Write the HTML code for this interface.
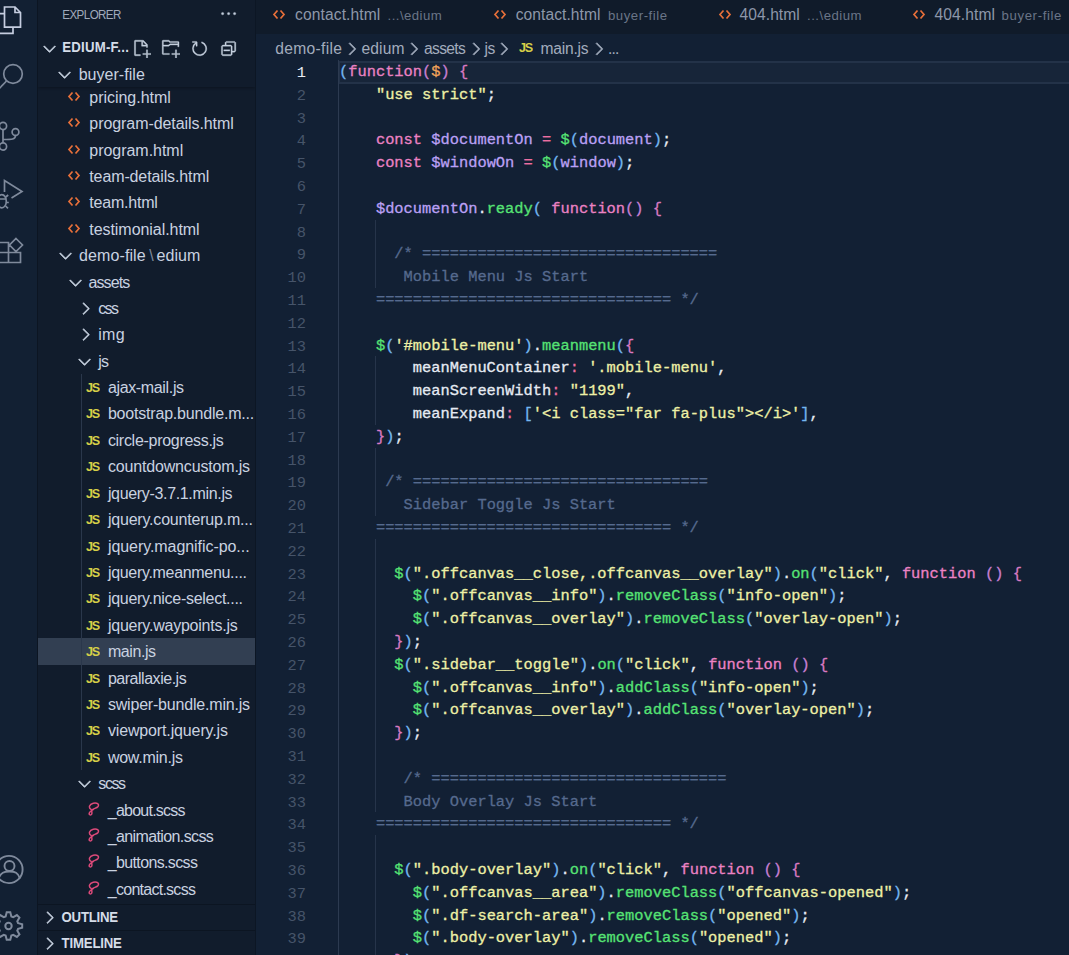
<!DOCTYPE html>
<html lang="en">
<head>
<meta charset="utf-8">
<title>main.js - edium - Visual Studio Code</title>
<style>
*{box-sizing:border-box;margin:0;padding:0}
html,body{width:1069px;height:955px;overflow:hidden;background:#122034}
body{position:relative;font-family:"Liberation Sans",sans-serif;color:#c5cfde;font-size:15.6px}
.ab{position:absolute}
#act{position:absolute;left:0;top:0;width:37px;height:955px;background:#122033;overflow:hidden}
#actb{position:absolute;left:37px;top:0;width:1px;height:955px;background:#0c1522}
#side{position:absolute;left:38px;top:0;width:218px;height:955px;background:#111c2c;overflow:hidden}
#sideb{position:absolute;left:255px;top:0;width:1px;height:955px;background:#0c1624}
#tabs{position:absolute;left:256px;top:0;width:813px;height:34px;background:#101b2a;overflow:hidden}
#crumbs{position:absolute;left:256px;top:34px;width:813px;height:26px;background:#122034}
#editor{position:absolute;left:256px;top:60px;width:813px;height:895px;background:#122034;overflow:hidden}
/* side */
#tree{position:absolute;left:-38px;top:0;width:300px;height:955px}
.lbl{font-size:16px;line-height:20px;color:#c9d2e0;white-space:nowrap}
.lbl.sep{color:#7f8a9c}
.jsic{font-weight:bold;font-size:12.6px;line-height:16px;color:#d6cf48;letter-spacing:-1.3px;transform:scaleY(1.04)}
.selrow{left:38px;width:217px;height:26.4px;background:#323f52}
.hdr{white-space:nowrap;transform:scaleY(1.14);transform-origin:0 50%;font-size:11.6px;color:#a0aabb;letter-spacing:0.1px}
.bold{white-space:nowrap;transform:scaleY(1.12);transform-origin:0 85%;font-weight:bold;font-size:13.2px;color:#d5dce8}
/* tabs */
.tab{position:absolute;top:0;height:34px;white-space:nowrap}
.nm{white-space:nowrap;font-size:15.6px;line-height:20px;color:#8d97a9}
.ds{white-space:nowrap;font-size:13.2px;line-height:18px;color:#6a7587}
/* crumbs */
.cr{font-size:15.6px;line-height:20px;color:#a2acbd;white-space:nowrap}
/* code */
.ln{position:absolute;left:0;width:813px;height:23px;line-height:23px;white-space:pre;font-family:"Liberation Mono",monospace;font-size:15.39px;color:#e6ebf3;-webkit-text-stroke:0.3px currentColor}
.ln .no{position:absolute;left:0;top:1.5px;-webkit-text-stroke:0;width:50px;text-align:right;color:#465469}
.ln .tx{position:absolute;left:83px;top:1px}
.ln.cur .no{color:#e6ebf3}
.k{color:#ec82c4}.s{color:#eef0a6}.f{color:#56e374}.v{color:#bba0f5}.p{color:#e6ebf3}.w{color:#e6ebf3}
.o{color:#ec6fa2}.cm{color:#566a8e}.pa{color:#f0a25a}
.b1{color:#74b6f0}.b2{color:#c67fd2}.b3{color:#da7ac2}
#curline{position:absolute;left:82px;top:1px;width:731px;height:22.5px;background:#172539;border:2px solid #233248;border-right:0}
.guide{position:absolute;width:1px;background:#26344a}
</style>
</head>
<body>
<div id="act">
 <svg class="ab" style="left:-14px;top:0" width="52" height="955" viewBox="-14 0 52 955" fill="none" stroke-width="1.7">
  <!-- files -->
  <g stroke="#c5cde0"><path d="M4.500 7 H15 L20.500 12.500 V27.200 H4.500 Z M15 7 V12.500 H20.500"/><path d="M4.500 13.600 H-6 V33.300 H13 V27.200"/></g>
  <g stroke="#7f8a9c">
  <!-- search -->
  <circle cx="13" cy="74" r="9.3"/><path d="M6.5 81 L-4 92"/>
  <!-- scm -->
  <circle cx="3" cy="126" r="3.6"/><circle cx="15.5" cy="132" r="3.4"/><circle cx="3" cy="146.5" r="3.6"/>
  <path d="M3 129.6 V143 M15.5 135.4 C15.5 139.5 12 139.5 3 139.5"/>
  <!-- run -->
  <path d="M4.5 192 V180.5 L22 191.5 L11.5 198"/><ellipse cx="1.8" cy="201.2" rx="4.5" ry="6.6"/><path d="M-2.700 199 H6.300 M5.800 197 L8.200 195 M6.300 202.500 H8.800 M5.600 206 L8 208.300"/>
  <!-- ext -->
  <path d="M-8 242.5 H8.5 V262.5 H-8 Z M-8 252.5 H20.5 V262.5 H8.5 M16 238.5 L22.5 245 L16 251.5 L9.5 245 Z"/>
  <!-- account -->
  <g stroke-width="1.9"><circle cx="9" cy="869.5" r="13.6"/><circle cx="9.5" cy="866" r="5"/><path d="M-1.500 878.500 C1 872.500 4 871.500 9.500 871.500 C15 871.500 18 872.500 20 878.500"/></g>
  <!-- gear -->
  <g stroke-width="2"><circle cx="8.5" cy="926" r="3.2"/>
  <path d="M18.08 923.14 L22.18 924.21 L22.18 927.79 L18.08 928.86 L17.30 930.75 L19.44 934.41 L16.91 936.94 L13.25 934.80 L11.36 935.58 L10.29 939.68 L6.71 939.68 L5.64 935.58 L3.75 934.80 L0.09 936.94 L-2.44 934.41 L-0.30 930.75 L-1.08 928.86 L-5.18 927.79 L-5.18 924.21 L-1.08 923.14 L-0.30 921.25 L-2.44 917.59 L0.09 915.06 L3.75 917.20 L5.64 916.42 L6.71 912.32 L10.29 912.32 L11.36 916.42 L13.25 917.20 L16.91 915.06 L19.44 917.59 L17.30 921.25 Z"/></g>
  </g>
 </svg>
</div>
<div id="actb"></div>
<div id="side">
 <div id="tree">
<svg class="ab" style="left:67.1px;top:91.2px" width="14" height="11" viewBox="0 0 14 11"><path d="M5.5 1.500 L2 5.500 L5.500 9.500 M8.500 1.500 L12 5.500 L8.500 9.500" fill="none" stroke="#e8703a" stroke-width="1.700"/></svg>
<span id="t0" class="ab lbl" style="left:89.3px;top:87.5px;letter-spacing:-0.028px">pricing.html</span>
<svg class="ab" style="left:67.1px;top:117.2px" width="14" height="11" viewBox="0 0 14 11"><path d="M5.5 1.500 L2 5.500 L5.500 9.500 M8.500 1.500 L12 5.500 L8.500 9.500" fill="none" stroke="#e8703a" stroke-width="1.700"/></svg>
<span id="t1" class="ab lbl" style="left:89.3px;top:113.5px;letter-spacing:-0.070px">program-details.html</span>
<svg class="ab" style="left:67.1px;top:144.2px" width="14" height="11" viewBox="0 0 14 11"><path d="M5.5 1.500 L2 5.500 L5.500 9.500 M8.500 1.500 L12 5.500 L8.500 9.500" fill="none" stroke="#e8703a" stroke-width="1.700"/></svg>
<span id="t2" class="ab lbl" style="left:89.3px;top:140.5px;letter-spacing:-0.032px">program.html</span>
<svg class="ab" style="left:67.1px;top:170.2px" width="14" height="11" viewBox="0 0 14 11"><path d="M5.5 1.500 L2 5.500 L5.500 9.500 M8.500 1.500 L12 5.500 L8.500 9.500" fill="none" stroke="#e8703a" stroke-width="1.700"/></svg>
<span id="t3" class="ab lbl" style="left:89.3px;top:166.5px;letter-spacing:-0.121px">team-details.html</span>
<svg class="ab" style="left:67.1px;top:196.2px" width="14" height="11" viewBox="0 0 14 11"><path d="M5.5 1.500 L2 5.500 L5.500 9.500 M8.500 1.500 L12 5.500 L8.500 9.500" fill="none" stroke="#e8703a" stroke-width="1.700"/></svg>
<span id="t4" class="ab lbl" style="left:89.3px;top:192.5px;letter-spacing:-0.206px">team.html</span>
<svg class="ab" style="left:67.1px;top:223.2px" width="14" height="11" viewBox="0 0 14 11"><path d="M5.5 1.500 L2 5.500 L5.500 9.500 M8.500 1.500 L12 5.500 L8.500 9.500" fill="none" stroke="#e8703a" stroke-width="1.700"/></svg>
<span id="t5" class="ab lbl" style="left:89.3px;top:219.5px;letter-spacing:-0.057px">testimonial.html</span>
<svg class="ab" style="left:56.10px;top:246.30px" width="19.20" height="19.20" viewBox="0 0 16 16"><path fill="#c5cfde" stroke="#c5cfde" stroke-width="0.55" fill-rule="evenodd" clip-rule="evenodd" d="M7.976 10.072l4.357-4.357.62.618L8.284 11h-.618L3 6.333l.619-.618 4.357 4.357z"/></svg>
<span id="t6" class="ab lbl" style="left:79.1px;top:245.5px;letter-spacing:0.086px">demo-file</span>

<span id="t7" class="ab lbl" style="left:156.6px;top:245.5px;letter-spacing:0.055px">edium</span>
<svg class="ab" style="left:65.80px;top:273.30px" width="19.20" height="19.20" viewBox="0 0 16 16"><path fill="#c5cfde" stroke="#c5cfde" stroke-width="0.55" fill-rule="evenodd" clip-rule="evenodd" d="M7.976 10.072l4.357-4.357.62.618L8.284 11h-.618L3 6.333l.619-.618 4.357 4.357z"/></svg>
<span id="t8" class="ab lbl" style="left:88.5px;top:272.5px;letter-spacing:-0.910px">assets</span>
<svg class="ab" style="left:75.90px;top:299.00px" width="19.20" height="19.20" viewBox="0 0 16 16"><path fill="#c5cfde" stroke="#c5cfde" stroke-width="0.55" fill-rule="evenodd" clip-rule="evenodd" d="M10.072 8.024L5.715 3.667l.618-.62L11 7.716v.618L6.333 13l-.618-.619 4.357-4.357z"/></svg>
<span id="t9" class="ab lbl" style="left:98.2px;top:298.5px;letter-spacing:-1.650px">css</span>
<svg class="ab" style="left:75.90px;top:325.00px" width="19.20" height="19.20" viewBox="0 0 16 16"><path fill="#c5cfde" stroke="#c5cfde" stroke-width="0.55" fill-rule="evenodd" clip-rule="evenodd" d="M10.072 8.024L5.715 3.667l.618-.62L11 7.716v.618L6.333 13l-.618-.619 4.357-4.357z"/></svg>
<span id="t10" class="ab lbl" style="left:98.2px;top:324.5px;letter-spacing:0.359px">img</span>
<svg class="ab" style="left:75.40px;top:352.30px" width="19.20" height="19.20" viewBox="0 0 16 16"><path fill="#c5cfde" stroke="#c5cfde" stroke-width="0.55" fill-rule="evenodd" clip-rule="evenodd" d="M7.976 10.072l4.357-4.357.62.618L8.284 11h-.618L3 6.333l.619-.618 4.357 4.357z"/></svg>
<span id="t11" class="ab lbl" style="left:98.2px;top:351.5px;letter-spacing:-0.762px">js</span>
<span class="ab jsic" style="left:86.0px;top:379.6px">JS</span>
<span id="t12" class="ab lbl" style="left:107.9px;top:377.5px;letter-spacing:-0.347px">ajax-mail.js</span>
<span class="ab jsic" style="left:86.0px;top:405.6px">JS</span>
<span id="t13" class="ab lbl" style="left:107.9px;top:403.5px;letter-spacing:-0.196px">bootstrap.bundle.m...</span>
<span class="ab jsic" style="left:86.0px;top:432.6px">JS</span>
<span id="t14" class="ab lbl" style="left:107.9px;top:430.5px;letter-spacing:-0.290px">circle-progress.js</span>
<span class="ab jsic" style="left:86.0px;top:458.6px">JS</span>
<span id="t15" class="ab lbl" style="left:107.9px;top:456.5px;letter-spacing:-0.163px">countdowncustom.js</span>
<span class="ab jsic" style="left:86.0px;top:485.6px">JS</span>
<span id="t16" class="ab lbl" style="left:107.9px;top:483.5px;letter-spacing:-0.334px">jquery-3.7.1.min.js</span>
<span class="ab jsic" style="left:86.0px;top:511.6px">JS</span>
<span id="t17" class="ab lbl" style="left:107.9px;top:509.5px;letter-spacing:-0.200px">jquery.counterup.m...</span>
<span class="ab jsic" style="left:86.0px;top:538.6px">JS</span>
<span id="t18" class="ab lbl" style="left:107.9px;top:536.5px;letter-spacing:-0.059px">jquery.magnific-po...</span>
<span class="ab jsic" style="left:86.0px;top:564.6px">JS</span>
<span id="t19" class="ab lbl" style="left:107.9px;top:562.5px;letter-spacing:-0.310px">jquery.meanmenu....</span>
<span class="ab jsic" style="left:86.0px;top:590.6px">JS</span>
<span id="t20" class="ab lbl" style="left:107.9px;top:588.5px;letter-spacing:-0.285px">jquery.nice-select....</span>
<span class="ab jsic" style="left:86.0px;top:617.6px">JS</span>
<span id="t21" class="ab lbl" style="left:107.9px;top:615.5px;letter-spacing:-0.227px">jquery.waypoints.js</span>
<div class="ab selrow" style="top:638.2px"></div>
<span class="ab jsic" style="left:86.0px;top:643.6px">JS</span>
<span id="t22" class="ab lbl" style="left:107.9px;top:641.5px;letter-spacing:-0.415px">main.js</span>
<span class="ab jsic" style="left:86.0px;top:670.6px">JS</span>
<span id="t23" class="ab lbl" style="left:107.9px;top:668.5px;letter-spacing:-0.474px">parallaxie.js</span>
<span class="ab jsic" style="left:86.0px;top:696.6px">JS</span>
<span id="t24" class="ab lbl" style="left:107.9px;top:694.5px;letter-spacing:-0.192px">swiper-bundle.min.js</span>
<span class="ab jsic" style="left:86.0px;top:722.6px">JS</span>
<span id="t25" class="ab lbl" style="left:107.9px;top:720.5px;letter-spacing:-0.137px">viewport.jquery.js</span>
<span class="ab jsic" style="left:86.0px;top:749.6px">JS</span>
<span id="t26" class="ab lbl" style="left:107.9px;top:747.5px;letter-spacing:-0.251px">wow.min.js</span>
<svg class="ab" style="left:75.40px;top:774.30px" width="19.20" height="19.20" viewBox="0 0 16 16"><path fill="#c5cfde" stroke="#c5cfde" stroke-width="0.55" fill-rule="evenodd" clip-rule="evenodd" d="M7.976 10.072l4.357-4.357.62.618L8.284 11h-.618L3 6.333l.619-.618 4.357 4.357z"/></svg>
<span id="t27" class="ab lbl" style="left:98.3px;top:773.5px;letter-spacing:-1.400px">scss</span>
<svg class="ab" style="left:86.6px;top:801.4px" width="13.8" height="15.6" viewBox="0 0 15 17"><path d="M4.4 9.2 C1.3 7.4 2.4 3.4 6.8 2.4 C11 1.500 13.6 3.400 12 6 C10.500 8.300 6.400 7.800 5.400 10 C4.600 11.800 6.200 13.500 4.800 14.700 C3.500 15.700 1.900 14.700 2.500 13 C3.100 11.300 5.600 10.200 7.200 9" fill="none" stroke="#dc4a7a" stroke-width="1.600" stroke-linecap="round"/></svg>
<span id="t28" class="ab lbl" style="left:107.8px;top:800.5px;letter-spacing:-0.759px">_about.scss</span>
<svg class="ab" style="left:86.6px;top:827.4px" width="13.8" height="15.6" viewBox="0 0 15 17"><path d="M4.4 9.2 C1.3 7.4 2.4 3.4 6.8 2.4 C11 1.500 13.6 3.400 12 6 C10.500 8.300 6.400 7.800 5.400 10 C4.600 11.800 6.200 13.500 4.800 14.700 C3.500 15.700 1.900 14.700 2.500 13 C3.100 11.300 5.600 10.200 7.200 9" fill="none" stroke="#dc4a7a" stroke-width="1.600" stroke-linecap="round"/></svg>
<span id="t29" class="ab lbl" style="left:107.8px;top:826.5px;letter-spacing:-0.623px">_animation.scss</span>
<svg class="ab" style="left:86.6px;top:853.4px" width="13.8" height="15.6" viewBox="0 0 15 17"><path d="M4.4 9.2 C1.3 7.4 2.4 3.4 6.8 2.4 C11 1.500 13.6 3.400 12 6 C10.500 8.300 6.400 7.800 5.400 10 C4.600 11.800 6.200 13.500 4.800 14.700 C3.500 15.700 1.900 14.700 2.500 13 C3.100 11.300 5.600 10.200 7.200 9" fill="none" stroke="#dc4a7a" stroke-width="1.600" stroke-linecap="round"/></svg>
<span id="t30" class="ab lbl" style="left:107.8px;top:852.5px;letter-spacing:-0.644px">_buttons.scss</span>
<svg class="ab" style="left:86.6px;top:880.4px" width="13.8" height="15.6" viewBox="0 0 15 17"><path d="M4.4 9.2 C1.3 7.4 2.4 3.4 6.8 2.4 C11 1.500 13.6 3.400 12 6 C10.500 8.300 6.400 7.800 5.400 10 C4.600 11.800 6.200 13.500 4.800 14.700 C3.500 15.700 1.900 14.700 2.500 13 C3.100 11.300 5.600 10.200 7.200 9" fill="none" stroke="#dc4a7a" stroke-width="1.600" stroke-linecap="round"/></svg>
<span id="t31" class="ab lbl" style="left:107.8px;top:879.5px;letter-spacing:-0.736px">_contact.scss</span>
<span class="ab lbl sep" style="left:149.2px;top:245.5px">\</span>
  <!-- indent guide for js / scss children -->
  <div class="ab" style="left:81px;top:374px;width:1px;height:396px;background:#2a374b"></div>
  <!-- sticky header overlay -->
  <div class="ab" style="left:38px;top:0;width:217px;height:86.5px;background:#111c2c;box-shadow:0 1px 3px rgba(0,0,0,.3)"></div>
    <!-- bottom panels -->
  <div class="ab" style="left:38px;top:904px;width:217px;height:51px;background:#111c2c;border-top:1px solid #0c1522"></div>
  <div class="ab" style="left:38px;top:930px;width:217px;height:1px;background:#0c1522"></div>
<span id="t32" class="ab hdr" style="left:62.3px;top:7.3px;letter-spacing:-0.579px">EXPLORER</span>
<span id="t33" class="ab bold" style="left:62.3px;top:39.5px;letter-spacing:0.226px">EDIUM-F...</span>
<span id="t34" class="ab lbl" style="left:78.7px;top:64.5px;letter-spacing:0.032px">buyer-file</span>
<span id="t35" class="ab bold" style="left:61.6px;top:909.5px;letter-spacing:-0.232px">OUTLINE</span>
<span id="t36" class="ab bold" style="left:61.6px;top:936.0px;letter-spacing:-0.178px">TIMELINE</span>
<svg class="ab" style="left:219.00px;top:3.80px" width="19.20" height="19.20" viewBox="0 0 16 16"><path fill="#c5cfde" stroke="#c5cfde" stroke-width="0.3" fill-rule="evenodd" clip-rule="evenodd" d="M4 8a1 1 0 1 1-2 0 1 1 0 0 1 2 0zm5 0a1 1 0 1 1-2 0 1 1 0 0 1 2 0zm5 0a1 1 0 1 1-2 0 1 1 0 0 1 2 0z"/></svg>
<svg class="ab" style="left:40.20px;top:38.80px" width="19.20" height="19.20" viewBox="0 0 16 16"><path fill="#c5cfde" stroke="#c5cfde" stroke-width="0.55" fill-rule="evenodd" clip-rule="evenodd" d="M7.976 10.072l4.357-4.357.62.618L8.284 11h-.618L3 6.333l.619-.618 4.357 4.357z"/></svg>
<svg class="ab" style="left:132.30px;top:38.80px" width="19.20" height="19.20" viewBox="0 0 16 16"><path fill="#c5cfde" stroke="#c5cfde" stroke-width="0.3" fill-rule="evenodd" clip-rule="evenodd" d="M9.5 1.1l3.4 3.5.1.4v2h-1V6H8V2H3v11h4v1H2.5l-.5-.5v-12l.5-.5h6.7l.3.1zM9 2v3h2.9L9 2zm4 14h-1v-3H9v-1h3V9h1v3h3v1h-3v3z"/></svg><svg class="ab" style="left:160.80px;top:38.80px" width="19.20" height="19.20" viewBox="0 0 16 16"><path fill="#c5cfde" stroke="#c5cfde" stroke-width="0.3" fill-rule="evenodd" clip-rule="evenodd" d="M14.5 2H7.71l-.85-.85L6.51 1h-5l-.5.5v11l.5.5H7v-1H1.99V6h4.49l.35-.15.86-.86H14v1.5h1v-4l-.5-.49zm-.51 2h-6.5l-.35.15-.86.86H2v-3h4.29l.85.85.36.15H14l-.01.99zM13 16h-1v-3H9v-1h3V9h1v3h3v1h-3v3z"/></svg><svg class="ab" style="left:189.60px;top:38.80px" width="19.20" height="19.20" viewBox="0 0 16 16"><path fill="#c5cfde" stroke="#c5cfde" stroke-width="0.3" fill-rule="evenodd" clip-rule="evenodd" d="M4.681 3H2V2h3.5l.5.5V6H5V4a5 5 0 1 0 4.53-.761l.302-.954A6 6 0 1 1 4.681 3z"/></svg><svg class="ab" style="left:218.60px;top:38.80px" width="19.20" height="19.20" viewBox="0 0 16 16"><path fill="#c5cfde" stroke="#c5cfde" stroke-width="0.3" fill-rule="evenodd" clip-rule="evenodd" d="M9 9H4v1h5V9z M5 3l1-1h7l1 1v7l-1 1h-2v2l-1 1H3l-1-1V6l1-1h2V3zm1 2h4l1 1v4h2V3H6v2zm4 1H3v7h7V6z"/></svg>
<svg class="ab" style="left:54.90px;top:65.30px" width="19.20" height="19.20" viewBox="0 0 16 16"><path fill="#c5cfde" stroke="#c5cfde" stroke-width="0.55" fill-rule="evenodd" clip-rule="evenodd" d="M7.976 10.072l4.357-4.357.62.618L8.284 11h-.618L3 6.333l.619-.618 4.357 4.357z"/></svg>
<svg class="ab" style="left:40.10px;top:907.80px" width="19.20" height="19.20" viewBox="0 0 16 16"><path fill="#c5cfde" stroke="#c5cfde" stroke-width="0.55" fill-rule="evenodd" clip-rule="evenodd" d="M10.072 8.024L5.715 3.667l.618-.62L11 7.716v.618L6.333 13l-.618-.619 4.357-4.357z"/></svg><svg class="ab" style="left:40.10px;top:934.30px" width="19.20" height="19.20" viewBox="0 0 16 16"><path fill="#c5cfde" stroke="#c5cfde" stroke-width="0.55" fill-rule="evenodd" clip-rule="evenodd" d="M10.072 8.024L5.715 3.667l.618-.62L11 7.716v.618L6.333 13l-.618-.619 4.357-4.357z"/></svg>
 </div>
</div>
<div id="sideb"></div>
<div id="tabs">
<svg class="ab" style="left:16.3px;top:8.5px" width="14" height="11" viewBox="0 0 14 11"><path d="M5.500 1.500 L2 5.500 L5.500 9.500 M8.500 1.500 L12 5.500 L8.500 9.500" fill="none" stroke="#e8703a" stroke-width="1.700"/></svg>
<span id="t37" class="ab nm" style="left:39.1px;top:4.5px;letter-spacing:0.102px">contact.html</span>
<span id="t38" class="ab ds" style="left:131.6px;top:6.5px;letter-spacing:0.440px">...\edium</span>
<svg class="ab" style="left:236.8px;top:8.5px" width="14" height="11" viewBox="0 0 14 11"><path d="M5.500 1.500 L2 5.500 L5.500 9.500 M8.500 1.500 L12 5.500 L8.500 9.500" fill="none" stroke="#e8703a" stroke-width="1.700"/></svg>
<span id="t39" class="ab nm" style="left:259.7px;top:4.5px;letter-spacing:0.066px">contact.html</span>
<span id="t40" class="ab ds" style="left:352.0px;top:6.5px;letter-spacing:0.528px">buyer-file</span>
<svg class="ab" style="left:461.5px;top:8.5px" width="14" height="11" viewBox="0 0 14 11"><path d="M5.500 1.500 L2 5.500 L5.500 9.500 M8.500 1.500 L12 5.500 L8.500 9.500" fill="none" stroke="#e8703a" stroke-width="1.700"/></svg>
<span id="t41" class="ab nm" style="left:483.5px;top:4.5px;letter-spacing:0.070px">404.html</span>
<span id="t42" class="ab ds" style="left:551.0px;top:6.5px;letter-spacing:0.503px">...\edium</span>
<svg class="ab" style="left:656.0px;top:8.5px" width="14" height="11" viewBox="0 0 14 11"><path d="M5.500 1.500 L2 5.500 L5.500 9.500 M8.500 1.500 L12 5.500 L8.500 9.500" fill="none" stroke="#e8703a" stroke-width="1.700"/></svg>
<span id="t43" class="ab nm" style="left:678.4px;top:4.5px;letter-spacing:0.113px">404.html</span>
<span id="t44" class="ab ds" style="left:745.5px;top:6.5px;letter-spacing:0.628px">buyer-file</span>
</div>
<div id="crumbs">
<span id="t45" class="ab cr" style="left:19.2px;top:4.5px;letter-spacing:0.332px">demo-file</span>
<svg class="ab" style="left:86.04px;top:4.90px" width="19.80" height="19.80" viewBox="0 0 16 16"><path fill="#a2acbd" stroke="#a2acbd" stroke-width="0.55" fill-rule="evenodd" clip-rule="evenodd" d="M10.072 8.024L5.715 3.667l.618-.62L11 7.716v.618L6.333 13l-.618-.619 4.357-4.357z"/></svg>
<span id="t46" class="ab cr" style="left:105.5px;top:4.5px;letter-spacing:0.129px">edium</span>
<svg class="ab" style="left:148.24px;top:4.90px" width="19.80" height="19.80" viewBox="0 0 16 16"><path fill="#a2acbd" stroke="#a2acbd" stroke-width="0.55" fill-rule="evenodd" clip-rule="evenodd" d="M10.072 8.024L5.715 3.667l.618-.62L11 7.716v.618L6.333 13l-.618-.619 4.357-4.357z"/></svg>
<span id="t47" class="ab cr" style="left:168.0px;top:4.5px;letter-spacing:-0.656px">assets</span>
<svg class="ab" style="left:209.84px;top:4.90px" width="19.80" height="19.80" viewBox="0 0 16 16"><path fill="#a2acbd" stroke="#a2acbd" stroke-width="0.55" fill-rule="evenodd" clip-rule="evenodd" d="M10.072 8.024L5.715 3.667l.618-.62L11 7.716v.618L6.333 13l-.618-.619 4.357-4.357z"/></svg>
<span id="t48" class="ab cr" style="left:228.6px;top:4.5px;letter-spacing:-0.466px">js</span>
<svg class="ab" style="left:238.34px;top:4.90px" width="19.80" height="19.80" viewBox="0 0 16 16"><path fill="#a2acbd" stroke="#a2acbd" stroke-width="0.55" fill-rule="evenodd" clip-rule="evenodd" d="M10.072 8.024L5.715 3.667l.618-.62L11 7.716v.618L6.333 13l-.618-.619 4.357-4.357z"/></svg>
<span class="ab jsic" style="left:263.0px;top:5.5px">JS</span>
<span id="t49" class="ab cr" style="left:284.6px;top:4.5px;letter-spacing:-0.234px">main.js</span>
<svg class="ab" style="left:332.84px;top:4.90px" width="19.80" height="19.80" viewBox="0 0 16 16"><path fill="#a2acbd" stroke="#a2acbd" stroke-width="0.55" fill-rule="evenodd" clip-rule="evenodd" d="M10.072 8.024L5.715 3.667l.618-.62L11 7.716v.618L6.333 13l-.618-.619 4.357-4.357z"/></svg>
<span id="t50" class="ab cr" style="left:352.0px;top:4.5px;letter-spacing:-0.850px">...</span>
</div>
<div id="editor">
 <div id="curline"></div>
 <div class="guide" style="left:82px;top:0;height:895px;background:#2c3a50"></div>
 <div class="guide" style="left:119px;top:159.600px;height:68.400px"></div>
 <div class="guide" style="left:119px;top:296.400px;height:68.400px"></div>
 <div class="guide" style="left:119px;top:387.600px;height:68.400px"></div>
 <div class="guide" style="left:119px;top:478.800px;height:273.600px"></div>
 <div class="guide" style="left:119px;top:775.200px;height:120px"></div>
<div class="ln cur" style="top:0px"><span class="no">1</span><span class="tx"><span class="b1">(</span><span class="k">function</span><span class="b2">(</span><span class="pa">$</span><span class="b2">)</span> <span class="b3">{</span></span></div>
<div class="ln" style="top:23px"><span class="no">2</span><span class="tx">    <span class="s">"use strict"</span><span class="w">;</span></span></div>
<div class="ln" style="top:46px"><span class="no">3</span><span class="tx"></span></div>
<div class="ln" style="top:68px"><span class="no">4</span><span class="tx">    <span class="k">const</span> <span class="v">$documentOn</span> <span class="o">=</span> <span class="f">$</span><span class="b1">(</span><span class="v">document</span><span class="b1">)</span><span class="w">;</span></span></div>
<div class="ln" style="top:91px"><span class="no">5</span><span class="tx">    <span class="k">const</span> <span class="v">$windowOn</span> <span class="o">=</span> <span class="f">$</span><span class="b1">(</span><span class="v">window</span><span class="b1">)</span><span class="w">;</span></span></div>
<div class="ln" style="top:114px"><span class="no">6</span><span class="tx"></span></div>
<div class="ln" style="top:137px"><span class="no">7</span><span class="tx">    <span class="v">$documentOn</span><span class="w">.</span><span class="f">ready</span><span class="b1">(</span> <span class="k">function</span><span class="b2">(</span><span class="b2">)</span> <span class="b3">{</span></span></div>
<div class="ln" style="top:160px"><span class="no">8</span><span class="tx"></span></div>
<div class="ln" style="top:182px"><span class="no">9</span><span class="tx">      <span class="cm">/* ================================</span></span></div>
<div class="ln" style="top:205px"><span class="no">10</span><span class="tx">       <span class="cm">Mobile Menu Js Start</span></span></div>
<div class="ln" style="top:228px"><span class="no">11</span><span class="tx">    <span class="cm">================================ */</span></span></div>
<div class="ln" style="top:251px"><span class="no">12</span><span class="tx"></span></div>
<div class="ln" style="top:274px"><span class="no">13</span><span class="tx">    <span class="f">$</span><span class="b1">(</span><span class="s">'#mobile-menu'</span><span class="b1">)</span><span class="w">.</span><span class="f">meanmenu</span><span class="b1">(</span><span class="b3">{</span></span></div>
<div class="ln" style="top:296px"><span class="no">14</span><span class="tx">        <span class="p">meanMenuContainer</span><span class="o">:</span> <span class="s">'.mobile-menu'</span><span class="w">,</span></span></div>
<div class="ln" style="top:319px"><span class="no">15</span><span class="tx">        <span class="p">meanScreenWidth</span><span class="o">:</span> <span class="s">"1199"</span><span class="w">,</span></span></div>
<div class="ln" style="top:342px"><span class="no">16</span><span class="tx">        <span class="p">meanExpand</span><span class="o">:</span> <span class="b1">[</span><span class="s">'&lt;i class="far fa-plus"&gt;&lt;/i&gt;'</span><span class="b1">]</span><span class="w">,</span></span></div>
<div class="ln" style="top:365px"><span class="no">17</span><span class="tx">    <span class="b3">}</span><span class="b1">)</span><span class="w">;</span></span></div>
<div class="ln" style="top:388px"><span class="no">18</span><span class="tx"></span></div>
<div class="ln" style="top:410px"><span class="no">19</span><span class="tx">     <span class="cm">/* ================================</span></span></div>
<div class="ln" style="top:433px"><span class="no">20</span><span class="tx">       <span class="cm">Sidebar Toggle Js Start</span></span></div>
<div class="ln" style="top:456px"><span class="no">21</span><span class="tx">    <span class="cm">================================ */</span></span></div>
<div class="ln" style="top:479px"><span class="no">22</span><span class="tx"></span></div>
<div class="ln" style="top:502px"><span class="no">23</span><span class="tx">      <span class="f">$</span><span class="b1">(</span><span class="s">".offcanvas__close,.offcanvas__overlay"</span><span class="b1">)</span><span class="w">.</span><span class="f">on</span><span class="b1">(</span><span class="s">"click"</span><span class="w">,</span> <span class="k">function</span> <span class="b2">(</span><span class="b2">)</span> <span class="b3">{</span></span></div>
<div class="ln" style="top:524px"><span class="no">24</span><span class="tx">        <span class="f">$</span><span class="b1">(</span><span class="s">".offcanvas__info"</span><span class="b1">)</span><span class="w">.</span><span class="f">removeClass</span><span class="b1">(</span><span class="s">"info-open"</span><span class="b1">)</span><span class="w">;</span></span></div>
<div class="ln" style="top:547px"><span class="no">25</span><span class="tx">        <span class="f">$</span><span class="b1">(</span><span class="s">".offcanvas__overlay"</span><span class="b1">)</span><span class="w">.</span><span class="f">removeClass</span><span class="b1">(</span><span class="s">"overlay-open"</span><span class="b1">)</span><span class="w">;</span></span></div>
<div class="ln" style="top:570px"><span class="no">26</span><span class="tx">      <span class="b3">}</span><span class="b1">)</span><span class="w">;</span></span></div>
<div class="ln" style="top:593px"><span class="no">27</span><span class="tx">      <span class="f">$</span><span class="b1">(</span><span class="s">".sidebar__toggle"</span><span class="b1">)</span><span class="w">.</span><span class="f">on</span><span class="b1">(</span><span class="s">"click"</span><span class="w">,</span> <span class="k">function</span> <span class="b2">(</span><span class="b2">)</span> <span class="b3">{</span></span></div>
<div class="ln" style="top:616px"><span class="no">28</span><span class="tx">        <span class="f">$</span><span class="b1">(</span><span class="s">".offcanvas__info"</span><span class="b1">)</span><span class="w">.</span><span class="f">addClass</span><span class="b1">(</span><span class="s">"info-open"</span><span class="b1">)</span><span class="w">;</span></span></div>
<div class="ln" style="top:638px"><span class="no">29</span><span class="tx">        <span class="f">$</span><span class="b1">(</span><span class="s">".offcanvas__overlay"</span><span class="b1">)</span><span class="w">.</span><span class="f">addClass</span><span class="b1">(</span><span class="s">"overlay-open"</span><span class="b1">)</span><span class="w">;</span></span></div>
<div class="ln" style="top:661px"><span class="no">30</span><span class="tx">      <span class="b3">}</span><span class="b1">)</span><span class="w">;</span></span></div>
<div class="ln" style="top:684px"><span class="no">31</span><span class="tx"></span></div>
<div class="ln" style="top:707px"><span class="no">32</span><span class="tx">       <span class="cm">/* ================================</span></span></div>
<div class="ln" style="top:730px"><span class="no">33</span><span class="tx">       <span class="cm">Body Overlay Js Start</span></span></div>
<div class="ln" style="top:752px"><span class="no">34</span><span class="tx">    <span class="cm">================================ */</span></span></div>
<div class="ln" style="top:775px"><span class="no">35</span><span class="tx"></span></div>
<div class="ln" style="top:798px"><span class="no">36</span><span class="tx">      <span class="f">$</span><span class="b1">(</span><span class="s">".body-overlay"</span><span class="b1">)</span><span class="w">.</span><span class="f">on</span><span class="b1">(</span><span class="s">"click"</span><span class="w">,</span> <span class="k">function</span> <span class="b2">(</span><span class="b2">)</span> <span class="b3">{</span></span></div>
<div class="ln" style="top:821px"><span class="no">37</span><span class="tx">        <span class="f">$</span><span class="b1">(</span><span class="s">".offcanvas__area"</span><span class="b1">)</span><span class="w">.</span><span class="f">removeClass</span><span class="b1">(</span><span class="s">"offcanvas-opened"</span><span class="b1">)</span><span class="w">;</span></span></div>
<div class="ln" style="top:844px"><span class="no">38</span><span class="tx">        <span class="f">$</span><span class="b1">(</span><span class="s">".df-search-area"</span><span class="b1">)</span><span class="w">.</span><span class="f">removeClass</span><span class="b1">(</span><span class="s">"opened"</span><span class="b1">)</span><span class="w">;</span></span></div>
<div class="ln" style="top:866px"><span class="no">39</span><span class="tx">        <span class="f">$</span><span class="b1">(</span><span class="s">".body-overlay"</span><span class="b1">)</span><span class="w">.</span><span class="f">removeClass</span><span class="b1">(</span><span class="s">"opened"</span><span class="b1">)</span><span class="w">;</span></span></div>
<div class="ln" style="top:889px"><span class="no">40</span><span class="tx">      <span class="b3">}</span><span class="b1">)</span><span class="w">;</span></span></div>
</div>
</body>
</html>
